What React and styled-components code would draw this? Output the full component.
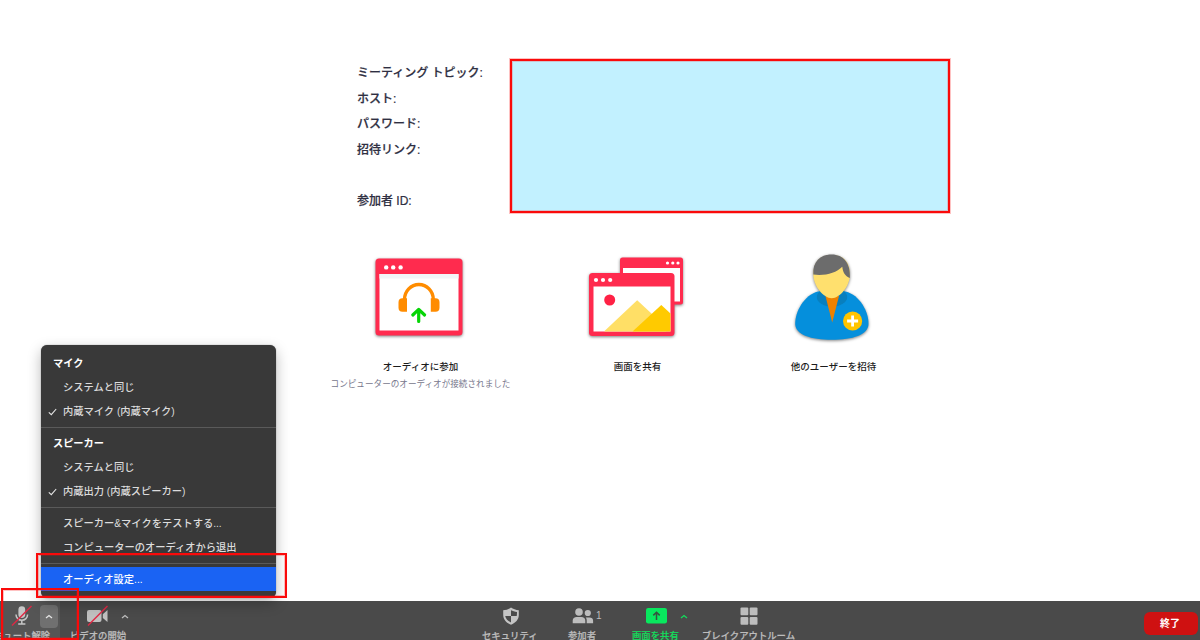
import React from 'react';
import styled, { createGlobalStyle } from 'styled-components';


const GlobalStyle = createGlobalStyle`
  * {
    box-sizing: border-box;
  }

  body {
    margin: 0;
    background: #ffffff;
    overflow: hidden;
    font-family: 'Liberation Sans', 'Noto Sans CJK JP', sans-serif;
  }
`;

const Page = styled.div`
  position: relative;
  display: flex;
  flex-direction: column;
  width: 1200px;
  height: 640px;
  overflow: hidden;
`;

const Main = styled.main`
  flex: 1;
  min-height: 0;
  padding-top: 59px;
`;

const Info = styled.section`
  display: flex;
  height: 154px;
  padding-left: 357px;
`;

const InfoLabels = styled.div`
  width: 153px;
  padding-top: 2px;
`;

const InfoLabel = styled.div`
  height: 25.6px;
  line-height: 25.6px;
  font-size: 12px;
  font-weight: 500;
  color: #2f2f42;
  -webkit-text-stroke: 0.2px #2f2f42;
  white-space: nowrap;
`;

const InfoValue = styled.div`
  width: 440px;
  height: 154px;
  border: 2px solid #fa0a0a;
  background: #c2f1ff;
  box-shadow: 0 0 0 1px rgba(250, 10, 10, 0.25), inset 0 0 0 1px rgba(250, 10, 10, 0.2);
`;

const Actions = styled.section`
  display: flex;
  padding: 37px 0 0 312px;
`;

const Action = styled.div`
  display: flex;
  flex-direction: column;
  align-items: center;
  width: ${({ $w }) => $w}px;

  svg {
    display: block;
    margin-right: 4px;
    overflow: visible;
    filter: drop-shadow(0 1px 1.5px rgba(0, 0, 0, 0.5));
  }
`;

const ActionTitle = styled.div`
  margin-top: 7px;
  height: 16px;
  line-height: 16px;
  font-size: 9.5px;
  font-weight: 500;
  color: #1c1c1c;
  white-space: nowrap;
`;

const ActionNote = styled.div`
  margin-top: 1px;
  height: 16px;
  line-height: 16px;
  font-size: 8.6px;
  color: #77778c;
  white-space: nowrap;
`;

const Menu = styled.div`
  position: absolute;
  left: 41px;
  top: 345px;
  width: 235px;
  height: 253px;
  padding: 6px 0;
  border-radius: 6px;
  background: #393939;
  box-shadow: 0 0 1px rgba(0, 0, 0, 0.6), 0 5px 14px rgba(0, 0, 0, 0.28);
`;

const MenuTitle = styled.div`
  height: 24px;
  padding: 1px 0 0 12px;
  line-height: 24px;
  font-size: 10.2px;
  font-weight: 700;
  color: #ffffff;
`;

const MenuItem = styled.div`
  display: flex;
  align-items: center;
  height: 24px;
  padding-top: 2px;
  font-size: 10.25px;
  font-weight: 500;
  line-height: 24px;
  white-space: nowrap;
  color: ${({ $active }) => $active ? '#ffffff' : '#dcdcdc'};
  background: ${({ $active }) => $active ? '#1a63f3' : 'transparent'};
`;

const CheckSlot = styled.span`
  display: flex;
  width: 22px;
  padding-left: 7px;
`;

const Divider = styled.div`
  height: 8px;
  padding-top: 4px;

  &::after {
    content: '';
    display: block;
    height: 1px;
    background: #5a5a5a;
  }
`;

const Marker = styled.div`
  position: absolute;
  left: ${({ $x }) => $x}px;
  top: ${({ $y }) => $y}px;
  width: ${({ $w }) => $w}px;
  height: ${({ $h }) => $h}px;
  border: 2px solid #fa0a0a;
  box-shadow: inset 0 0 0 1px rgba(250, 10, 10, 0.25);
`;

const Toolbar = styled.footer`
  display: flex;
  height: 39px;
  background: #4a4a4a;
`;

const Tool = styled.div`
  display: flex;
  flex-direction: column;
  flex-shrink: 0;
  width: ${({ $w }) => $w}px;
  margin-left: ${({ $gap }) => $gap || 0}px;
  color: ${({ $green }) => $green ? '#14dc5c' : '#bdbdbd'};
  background: ${({ $hover }) => $hover ? '#555555' : 'transparent'};
`;

const ToolIcons = styled.div`
  display: flex;
  align-items: center;
  height: 30px;
  padding-left: ${({ $pad }) => $pad}px;

  svg {
    display: block;
    flex-shrink: 0;
  }
`;

const ToolLabel = styled.div`
  height: 9px;
  line-height: 10px;
  font-size: 9.35px;
  font-weight: 500;
  white-space: nowrap;
  margin-left: ${({ $shift }) => $shift || 0}px;
  -webkit-text-stroke: 0.2px currentColor;
`;

const Caret = styled.span`
  display: flex;
  align-items: center;
  justify-content: center;
  width: 18px;
  height: 23px;
  margin-left: ${({ $gap }) => $gap}px;
  border-radius: 4px;
  color: ${({ $on }) => $on ? '#e6e6e6' : 'inherit'};
  background: ${({ $on }) => $on ? '#707070' : 'transparent'};
`;

const Count = styled.span`
  align-self: flex-start;
  margin: 8px 0 0 2px;
  line-height: 14px;
  font-size: 10px;
`;

const EndArea = styled.div`
  display: flex;
  flex: 1;
  padding-right: 2px;
`;

const EndButton = styled.button`
  width: 54px;
  height: 23px;
  margin: 11px 0 0 auto;
  padding: 0 2px 0 0;
  border: 0;
  border-radius: 6px;
  background: #cf1111;
  color: #ffffff;
  font-family: inherit;
  font-size: 10px;
  font-weight: 700;
  line-height: 23px;
`;


const AudioIcon = () => (
  <svg width="90" height="102" viewBox="0 0 90 102">
    <rect x="1.5" y="8.5" width="87" height="77" rx="3.5" fill="#ff2b4e" />
    <rect x="5.5" y="24" width="79" height="56.5" fill="#fff" />
    <rect x="5.5" y="24" width="79" height="4.5" fill="#f2f6f8" />
    <g fill="#fff">
      <circle cx="12.2" cy="17.4" r="2.2" />
      <circle cx="19.2" cy="17.4" r="2.2" />
      <circle cx="26.6" cy="17.4" r="2.2" />
    </g>
    <path d="M30.5 52V49.5a14.4 15 0 0 1 28.8 0V52" fill="none" stroke="#ff8c00" strokeWidth="3.4" />
    <path d="M33 48.3v13.5h-4.5a4 4 0 0 1-4-4v-5.5a4 4 0 0 1 4-4zM56.8 48.3v13.5h4.7a4 4 0 0 0 4-4v-5.5a4 4 0 0 0-4-4z" fill="#ff8c00" />
    <path d="M44.7 71.5V59.5M38.8 65l5.9-5.6 5.9 5.6" fill="none" stroke="#06d506" strokeWidth="3.2" strokeLinecap="round" strokeLinejoin="round" />
  </svg>
);

const ShareIcon = () => (
  <svg width="96" height="102" viewBox="0 0 96 102">
    <rect x="32" y="7.5" width="63" height="47" rx="2.5" fill="#ff2b4e" />
    <rect x="35" y="18" width="57" height="33.5" fill="#fff" />
    <g fill="#fff">
      <circle cx="79.5" cy="13" r="1.6" />
      <circle cx="84.8" cy="13" r="1.6" />
      <circle cx="90" cy="13" r="1.6" />
    </g>
    <rect x="1" y="23" width="85.5" height="63" rx="3.5" fill="#ff2b4e" />
    <rect x="5.5" y="36.5" width="77" height="45" fill="#fff" />
    <g fill="#fff">
      <circle cx="8" cy="30" r="2.1" />
      <circle cx="15" cy="30" r="2.1" />
      <circle cx="22.2" cy="30" r="2.1" />
    </g>
    <circle cx="21.7" cy="50" r="5.5" fill="#ff2145" />
    <path d="M16 81.5L49.2 50.3L78 77V81.5z" fill="#ffdf66" />
    <path d="M44.5 81.5L73.3 55L82.5 63.5V81.5z" fill="#ffca00" />
  </svg>
);

const InviteIcon = () => (
  <svg width="88" height="102" viewBox="0 0 88 102">
    <path d="M30 41.5C16 45 7 62 7.2 74C7.5 85 23 89.7 43.8 89.7S80.3 85 80.5 74C80.7 62 72 45 57.5 41.5z" fill="#058fdc" />
    <ellipse cx="44" cy="47" rx="15.2" ry="9.7" fill="#087fbe" />
    <path d="M37.5 46H51L44.2 72.5z" fill="#ee8100" />
    <path d="M25.3 24C25.3 12 32 5 43.7 5S62 12 62 24C62 36 52 48.2 43.7 48.2S25.3 36 25.3 24z" fill="#ffe06e" />
    <path d="M25.3 24.5C24.5 12 32 4.5 43.7 4.5S62.8 13 61.9 28C57 26 54.8 22 54.3 16.7C48 23 37 26 25.3 24.5z" fill="#6c6c6c" />
    <circle cx="64.6" cy="71" r="9.6" fill="#ffc400" />
    <path d="M64.6 65.5v11M59.1 71h11" stroke="#fff" strokeWidth="2.8" />
  </svg>
);

const CheckIcon = () => (
  <svg width="9" height="8" viewBox="0 0 9 8">
    <path d="M.8 4.3l2.5 2.3L8.2 1" fill="none" stroke="#e6e6e6" strokeWidth="1.1" />
  </svg>
);

const CaretIcon = () => (
  <svg width="8" height="5" viewBox="0 0 8 5">
    <path d="M1 4l3-2.5L7 4" fill="none" stroke="currentColor" strokeWidth="1.3" />
  </svg>
);

const MicIcon = () => (
  <svg width="22" height="22" viewBox="0 0 22 22">
    <rect x="7.4" y="1.3" width="6.8" height="11.7" rx="3.4" fill="#c6c6c6" />
    <path d="M5 9.5a5.8 5.8 0 0 0 11.6 0M10.8 15.3V18.7M7.2 19.1h7.2" fill="none" stroke="#c6c6c6" strokeWidth="1.5" />
    <path d="M1 20.5L20.5 1" stroke="#df2945" strokeWidth="1.4" />
  </svg>
);

const VideoIcon = () => (
  <svg width="24" height="22" viewBox="0 0 24 22">
    <rect x="1" y="5" width="14.5" height="12" rx="2" fill="#c0c0c0" />
    <path d="M16.8 9.3L21.5 5v12l-4.7-4z" fill="#c0c0c0" />
    <path d="M2 20.5L21.5 1" stroke="#df2945" strokeWidth="1.5" />
  </svg>
);

const ShieldIcon = () => (
  <svg width="18" height="18" viewBox="0 0 18 18">
    <path d="M9 .5C11 2 14 3 16.8 3.2V8C16.8 12.5 13.5 16 9 17.7C4.5 16 1.2 12.5 1.2 8V3.2C4 3 7 2 9 .5z" fill="#c4c4c4" />
    <path d="M9 3.3V9H14.7C15 8 15 6 15 5C12.8 4.8 10.5 4.2 9 3.3zM9 9V15.4C6 14 3.8 12 3.2 9z" fill="#4a4a4a" />
  </svg>
);

const PeopleIcon = () => (
  <svg width="22" height="18" viewBox="0 0 22 18" fill="#bdbdbd">
    <circle cx="7" cy="5" r="3.8" />
    <path d="M.7 16.3v-2.6c0-2.4 1.6-3.6 4-3.6h4.6c2.4 0 4 1.2 4 3.6v2.6z" />
    <circle cx="15.8" cy="6" r="3.1" />
    <path d="M14.7 16.3v-2.8c0-1.3-.4-2.2-1-2.9h3.8c2.2 0 3.6 1.1 3.6 3.1v2.6z" />
  </svg>
);

const ScreenIcon = () => (
  <svg width="21" height="16" viewBox="0 0 21 16">
    <rect width="21" height="15.5" rx="2.2" fill="#08e85e" />
    <path d="M10.5 12V4.3M7.3 7.4l3.2-3.2 3.2 3.2" fill="none" stroke="#36513f" strokeWidth="1.5" />
  </svg>
);

const RoomsIcon = () => (
  <svg width="18" height="18" viewBox="0 0 18 18" fill="#bdbdbd">
    <rect x=".5" y=".5" width="7.8" height="7.8" rx="1" />
    <rect x="9.7" y=".5" width="7.8" height="7.8" rx="1" />
    <rect x=".5" y="9.9" width="7.8" height="7.8" rx="1" />
    <rect x="9.7" y="9.9" width="7.8" height="7.8" rx="1" />
  </svg>
);

const Item = ({ children, checked, active }) => (
  <MenuItem $active={active}>
    <CheckSlot>{checked && <CheckIcon />}</CheckSlot>
    {children}
  </MenuItem>
);

const AudioMenu = () => (
  <Menu>
    <MenuTitle>マイク</MenuTitle>
    <Item>システムと同じ</Item>
    <Item checked>内蔵マイク (内蔵マイク)</Item>
    <Divider />
    <MenuTitle>スピーカー</MenuTitle>
    <Item>システムと同じ</Item>
    <Item checked>内蔵出力 (内蔵スピーカー)</Item>
    <Divider />
    <Item>スピーカー&amp;マイクをテストする...</Item>
    <Item>コンピューターのオーディオから退出</Item>
    <Divider />
    <Item active>オーディオ設定...</Item>
  </Menu>
);

const App = () => {

  return (
    <>
      <GlobalStyle />
      <Page>
        <Main>
          <Info>
            <InfoLabels>
              <InfoLabel>ミーティング トピック:</InfoLabel>
              <InfoLabel>ホスト:</InfoLabel>
              <InfoLabel>パスワード:</InfoLabel>
              <InfoLabel>招待リンク:</InfoLabel>
              <InfoLabel />
              <InfoLabel>参加者 ID:</InfoLabel>
            </InfoLabels>
            <InfoValue />
          </Info>
          <Actions>
            <Action $w={217}>
              <AudioIcon />
              <ActionTitle>オーディオに参加</ActionTitle>
              <ActionNote>コンピューターのオーディオが接続されました</ActionNote>
            </Action>
            <Action $w={217}>
              <ShareIcon />
              <ActionTitle>画面を共有</ActionTitle>
            </Action>
            <Action $w={175}>
              <InviteIcon />
              <ActionTitle>他のユーザーを招待</ActionTitle>
            </Action>
          </Actions>
        </Main>
        <Toolbar>
          <Tool $w={60} $hover>
            <ToolIcons $pad={11}>
              <MicIcon />
              <Caret $on $gap={7}><CaretIcon /></Caret>
            </ToolIcons>
            <ToolLabel $shift={-6}>ミュート解除</ToolLabel>
          </Tool>
          <Tool $w={66} $gap={10}>
            <ToolIcons $pad={16}>
              <VideoIcon />
              <Caret $gap={6}><CaretIcon /></Caret>
            </ToolIcons>
            <ToolLabel>ビデオの開始</ToolLabel>
          </Tool>
          <Tool $w={56} $gap={346}>
            <ToolIcons $pad={20}>
              <ShieldIcon />
            </ToolIcons>
            <ToolLabel>セキュリティ</ToolLabel>
          </Tool>
          <Tool $w={34} $gap={30}>
            <ToolIcons $pad={4}>
              <PeopleIcon />
              <Count>1</Count>
            </ToolIcons>
            <ToolLabel>参加者</ToolLabel>
          </Tool>
          <Tool $w={60} $gap={30} $green>
            <ToolIcons $pad={14}>
              <ScreenIcon />
              <Caret $gap={8}><CaretIcon /></Caret>
            </ToolIcons>
            <ToolLabel>画面を共有</ToolLabel>
          </Tool>
          <Tool $w={94} $gap={10}>
            <ToolIcons $pad={38}>
              <RoomsIcon />
            </ToolIcons>
            <ToolLabel>ブレイクアウトルーム</ToolLabel>
          </Tool>
          <EndArea>
            <EndButton>終了</EndButton>
          </EndArea>
        </Toolbar>
        <AudioMenu />
        <Marker $x={36} $y={553} $w={251} $h={45} />
        <Marker $x={1} $y={588} $w={78} $h={52} />
      </Page>
    </>
  );
}

export default App;
